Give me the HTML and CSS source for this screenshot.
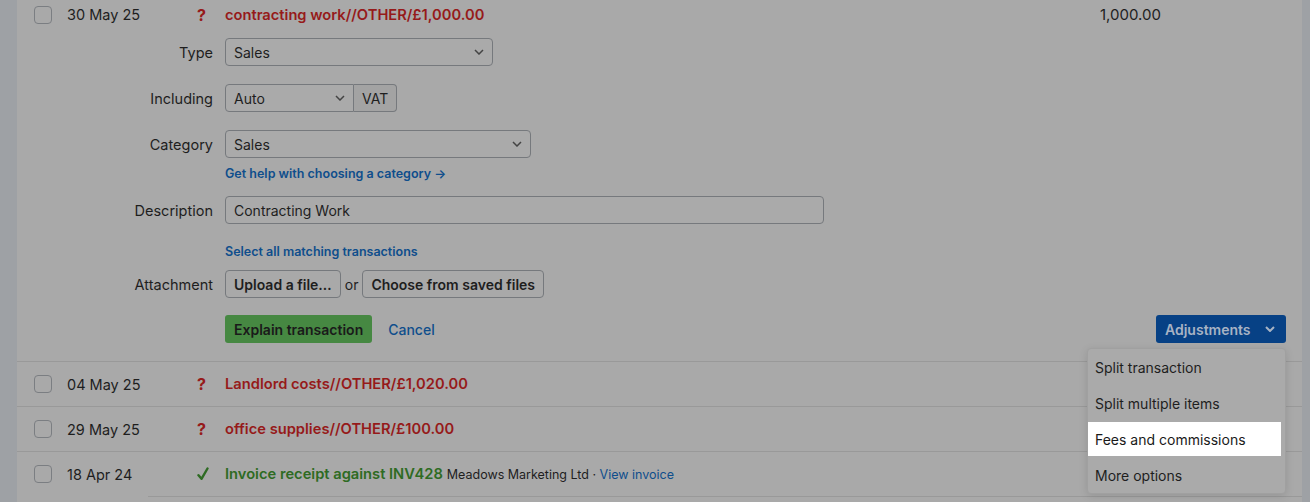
FILE: index.html
```html
<!DOCTYPE html>
<html>
<head>
<meta charset="utf-8">
<link rel="stylesheet" href="styles.css">
</head>
<body>
<div class="page">
  <div class="strip"></div>
  <div class="main">
    <div class="row row-open">
      <div class="row-head">
        <span class="check"></span>
        <span class="date">30 May 25</span>
        <span class="status q">?</span>
        <span class="title red">contracting work//OTHER/£1,000.00</span>
        <span class="amount">1,000.00</span>
      </div>
      <div class="form">
        <div class="field f-type">
          <label class="lbl">Type</label>
          <div class="select w-type"><span>Sales</span><svg class="chev" viewBox="0 0 10 6"><path d="M1 1l4 4 4-4"/></svg></div>
        </div>
        <div class="field f-incl">
          <label class="lbl">Including</label>
          <div class="group">
            <div class="select w-auto"><span>Auto</span><svg class="chev" viewBox="0 0 10 6"><path d="M1 1l4 4 4-4"/></svg></div>
            <div class="addon">VAT</div>
          </div>
        </div>
        <div class="field f-cat">
          <label class="lbl">Category</label>
          <div class="select w-cat"><span>Sales</span><svg class="chev" viewBox="0 0 10 6"><path d="M1 1l4 4 4-4"/></svg></div>
        </div>
        <div class="hint"><a class="link-s">Get help with choosing a category →</a></div>
        <div class="field f-desc">
          <label class="lbl">Description</label>
          <div class="input w-desc">Contracting Work</div>
        </div>
        <div class="hint hint2"><a class="link-s">Select all matching transactions</a></div>
        <div class="field f-att">
          <label class="lbl">Attachment</label>
          <div class="att">
            <span class="btn">Upload a file…</span>
            <span class="or">or</span>
            <span class="btn">Choose from saved files</span>
          </div>
        </div>
        <div class="field f-act">
          <span class="lbl"></span>
          <div class="actions">
            <span class="btn-green">Explain transaction</span>
            <a class="cancel">Cancel</a>
            <span class="spacer"></span>
            <span class="btn-blue">Adjustments <svg class="chev-w" viewBox="0 0 10 6"><path d="M1 1l4 4 4-4"/></svg></span>
          </div>
        </div>
      </div>
    </div>
    <div class="row">
      <div class="row-head">
        <span class="check"></span>
        <span class="date">04 May 25</span>
        <span class="status q">?</span>
        <span class="title red">Landlord costs//OTHER/£1,020.00</span>
      </div>
    </div>
    <div class="row">
      <div class="row-head">
        <span class="check"></span>
        <span class="date">29 May 25</span>
        <span class="status q">?</span>
        <span class="title red">office supplies//OTHER/£100.00</span>
      </div>
    </div>
    <div class="row row-last">
      <div class="row-head">
        <span class="check"></span>
        <span class="date">18 Apr 24</span>
        <span class="status ok"><svg viewBox="0 0 12 14"><path d="M1.5 8.2l3 3.6L10.5 1.5"/></svg></span>
        <span class="title green">Invoice receipt against INV428</span>
        <span class="meta">Meadows Marketing Ltd · <a class="vlink">View invoice</a></span>
      </div>
      <div class="subline"></div>
    </div>
    <div class="menu">
      <div class="mi">Split transaction</div>
      <div class="mi">Split multiple items</div>
      <div class="mi mi-hl">Fees and commissions</div>
      <div class="mi">More options</div>
    </div>
  </div>
  <div class="strip-r"></div>
</div>
</body>
</html>
```

FILE: styles.css
```css
* { box-sizing: border-box; }
html, body { margin: 0; padding: 0; }
body {
  font-family: "Inter", "Liberation Sans", sans-serif;
  font-size: 14px;
  color: #1e1e1e;
  background: #a9a9a9;
  width: 1310px;
  height: 502px;
  overflow: hidden;
}
.page { display: flex; height: 502px; }
.strip { width: 17px; flex: none; background: #9ea1a5; }
.strip-r { width: 8px; flex: none; background: #9ea1a5; }
.main { flex: 1; position: relative; background: #a9a9a9; }

.row { border-bottom: 1px solid #999999; }
.row-last { border-bottom: none; }
.row-head {
  display: flex; align-items: center; height: 44px; position: relative;
}
.row-open .row-head { height: 29px; }
.check {
  width: 18px; height: 18px; border: 1px solid #7b7e82; border-radius: 4px;
  margin-left: 17px; flex: none;
}
.date { margin-left: 15px; width: 130px; font-size: 14.5px; flex: none; }
.status { width: 28px; flex: none; text-align: left; font-weight: 700; font-size: 16px; }
.status.q { color: #961a1a; }
.status svg { width: 12px; height: 14px; fill: none; stroke: #2e6b23; stroke-width: 2.4; stroke-linecap: round; stroke-linejoin: round; margin-top: 3px; }
.title { font-weight: 600; font-size: 14.7px; }
.red { color: #961a1a; }
.green { color: #2e6b23; }
.meta { font-size: 12.5px; margin-left: 4px; color: #1e1e1e; }
.vlink { color: #0f4e8c; }
.amount { position: absolute; left: 1083px; font-size: 15px; }

.form { display: flex; flex-direction: column; padding-bottom: 18px; }
.field { display: flex; align-items: center; }
.lbl { width: 208px; text-align: right; padding-right: 12px; flex: none; font-size: 14.5px; }
.f-type { margin-top: 9px; }
.f-incl, .f-cat { margin-top: 18px; }
.f-desc { margin-top: 16px; }
.f-att { margin-top: 12px; }
.f-act { margin-top: 17px; }
.hint { padding-left: 208px; margin-top: 7px; height: 15px; line-height: 15px; }
.hint2 { margin-top: 19px; }
.link-s { color: #0f4e8c; font-weight: 600; font-size: 12.5px; }

.select, .input {
  height: 28px; border: 1px solid #76797d; border-radius: 4px;
  display: flex; align-items: center; justify-content: space-between;
  padding: 0 8px; background: #aaaaaa;
}
.chev { width: 10px; height: 6px; fill: none; stroke: #444; stroke-width: 1.5; }
.w-type { width: 268px; }
.w-cat { width: 306px; }
.w-desc { width: 599px; }
.group { display: flex; }
.w-auto { width: 129px; border-radius: 4px 0 0 4px; }
.addon {
  height: 28px; border: 1px solid #76797d; border-left: none; border-radius: 0 4px 4px 0;
  padding: 0 8px; display: flex; align-items: center; background: #a3a3a3;
}
.att { display: flex; align-items: center; }
.btn {
  height: 28px; border: 1px solid #76797d; border-radius: 4px; padding: 0 8px;
  display: flex; align-items: center; font-weight: 600;
}
.or { margin: 0 4px; }
.actions { display: flex; align-items: center; flex: 1; padding-right: 16px; }
.btn-green {
  height: 28px; background: #468842; border-radius: 3px; padding: 0 9px;
  display: flex; align-items: center; font-weight: 600; color: #1a1a1a;
}
.cancel { color: #0f4e8c; margin-left: 16px; font-weight: 500; }
.spacer { flex: 1; }
.btn-blue {
  height: 28px; width: 130px; background: #074185; border-radius: 3px; padding: 0 9px;
  display: flex; align-items: center; justify-content: space-between; font-weight: 600; color: #a7b3c4;
}
.chev-w { width: 10px; height: 6px; fill: none; stroke: #a7b3c4; stroke-width: 2; margin-right: 2px; }

.subline { margin-left: 131px; border-bottom: 1px solid #999999; }

.menu {
  position: absolute; left: 1070px; top: 348px; width: 199px; height: 146px;
  background: #aaaaaa; border: 1px solid #a0a0a0; border-radius: 4px;
  box-shadow: 0 2px 8px rgba(0,0,0,0.12);
  padding: 0 4px 0 0;
}
.mi { height: 36px; display: flex; align-items: center; padding-left: 7px; font-size: 14px; }
.mi-hl { background: #ffffff; color: #1a1a1a; height: 34px; margin-top: 1px; margin-bottom: 1px; }
```
